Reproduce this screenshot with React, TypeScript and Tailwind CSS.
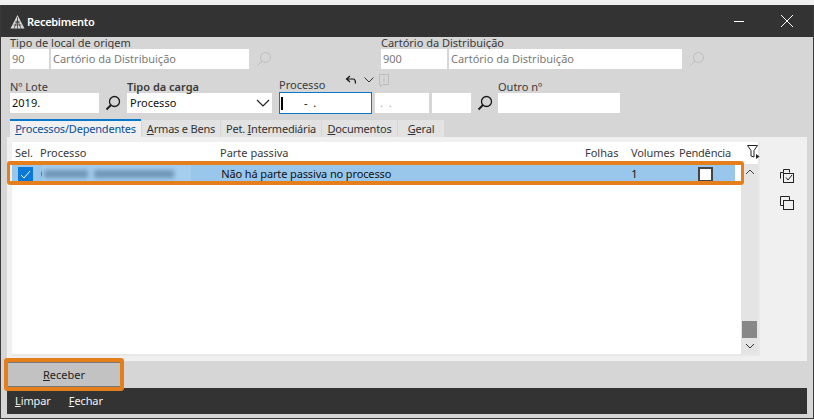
import React from "react";

const Search = ({ muted = false }: { muted?: boolean }) => (
  <svg width="16" height="16" viewBox="0 0 16 16" fill="none" stroke={muted ? "#bdbdbd" : "#1a1a1a"} strokeWidth={muted ? 1 : 1.3}>
    <circle cx="9.5" cy="6.5" r="5" />
    <path d="M6 10 L1.5 14.5" strokeWidth={muted ? 1 : 1.8} />
  </svg>
);

const Field = ({ w, children, muted = false, className = "" }: { w: string; children?: React.ReactNode; muted?: boolean; className?: string }) => (
  <div className={`${w} h-[20px] bg-white flex items-center px-[2px] ${muted ? "text-[#7a7a7a]" : "text-[#111]"} ${className}`}>{children}</div>
);

const Tab = ({ first, rest, pre = "", active = false, w }: { first: string; rest: string; pre?: string; active?: boolean; w: string }) => (
  <div className={`${w} flex items-center justify-center tracking-[-0.2px] ${active ? "h-[18px] bg-[#f0f0f0] border-t-2 border-[#0a78c8] text-[#0a4f96]" : "h-[17px] bg-[#e2e2e2] mt-[1px] text-[#333]"}`}>
    <span className="whitespace-pre">
      {pre}
      <u>{first}</u>
      {rest}
    </span>
  </div>
);

export default function App() {
  return (
    <div className="w-[814px] h-[420px] bg-[#f0f0f0] pt-[5px] overflow-hidden text-[11px] leading-[14px] text-[#3a3a3a]" style={{ fontFamily: '"Noto Sans", sans-serif' }}>
      <div className="h-[414px] bg-[#d6d6d6] border-l border-r border-b border-[#3a3a3a] flex flex-col relative">
        {/* title bar */}
        <div className="h-[32px] shrink-0 bg-[#333333] flex items-center pl-[9px] pr-[19px] text-white font-semibold">
          <svg width="15" height="15" viewBox="0 0 15 15" className="mr-[2px]">
            <path d="M7.5 1 L14.5 14.5 H0.5 Z" fill="#d8d8d8" />
            <path d="M7.5 3 V14.5 M5 8 H10 M3.5 11 H11.5 M4 14.5 L7.5 6 L11 14.5" stroke="#333" strokeWidth="0.7" fill="none" />
          </svg>
          <span className="tracking-[-0.3px] pt-[1px]">Recebimento</span>
          <div className="flex-1" />
          <svg width="12" height="12" viewBox="0 0 12 12" className="mr-[35px]"><path d="M1 6.5 H11" stroke="#fff" strokeWidth="1" /></svg>
          <svg width="14" height="14" viewBox="0 0 14 14"><path d="M1 1 L13 13 M13 1 L1 13" stroke="#fff" strokeWidth="1" fill="none" /></svg>
        </div>

        {/* top fields */}
        <div className="flex pl-[9px]">
          <div className="w-[371px]">
            <div className="h-[12px] leading-[12px]">Tipo de local de origem</div>
            <div className="flex items-center gap-[2px]">
              <Field w="w-[39px]" muted>90</Field>
              <Field w="w-[198px]" muted>Cartório da Distribuição</Field>
              <div className="ml-[5px]"><Search muted /></div>
            </div>
          </div>
          <div>
            <div className="h-[12px] leading-[12px]">Cartório da Distribuição</div>
            <div className="flex items-center gap-[2px]">
              <Field w="w-[66px]" muted>900</Field>
              <Field w="w-[233px]" muted>Cartório da Distribuição</Field>
              <div className="ml-[5px]"><Search muted /></div>
            </div>
          </div>
        </div>

        {/* second row */}
        <div className="flex items-end pl-[9px] mt-[6px]">
          <div className="w-[89px]">
            <div className="h-[13px] leading-[13px]">Nº Lote</div>
            <Field w="w-[89px]">2019.</Field>
          </div>
          <div className="w-[28px] h-[20px] flex items-center justify-center"><Search /></div>
          <div className="w-[145px]">
            <div className="h-[13px] leading-[13px] font-semibold">Tipo da carga</div>
            <Field w="w-[145px]" className="justify-between pl-[3px]">
              Processo
              <svg width="14" height="8" viewBox="0 0 14 8" fill="none" stroke="#222" strokeWidth="1.2"><path d="M1 1 L7 7 L13 1" /></svg>
            </Field>
          </div>
          <div className="w-[93px] ml-[7px]">
            <div className="flex items-start h-[17px]">
              <span className="mt-[3px]">Processo</span>
              <svg width="12" height="10" viewBox="0 0 12 10" className="ml-[20px] shrink-0" fill="none" stroke="#111" strokeWidth="1.2"><path d="M5 1 L1.5 4 L5 7 M1.5 4 H8 Q10.5 4 10.5 8.5" /></svg>
              <svg width="10" height="6" viewBox="0 0 10 6" className="ml-[7px] mt-[2px] shrink-0" fill="none" stroke="#333"><path d="M0.5 0.5 L5 5 L9.5 0.5" /></svg>
              <svg width="10" height="13" viewBox="0 0 10 13" className="ml-[5px] -mt-[1px] shrink-0" fill="none" stroke="#bcbcbc"><path d="M0.5 0.5 H9.5 V10.5 H4 L1.5 12.5 V10.5 H0.5 Z" /><path d="M5 2.5 V3.5 M5 4.5 V8.5" /></svg>
            </div>
            <div className="w-[93px] h-[22px] bg-white border border-[#0a78c8] flex items-center pl-[1px] -mb-px">
              <div className="w-[2px] h-[13px] bg-black" />
              <span className="ml-[21px] text-[#111]">-&nbsp;&nbsp;.</span>
            </div>
          </div>
          <Field w="w-[54px]" muted className="ml-[3px]"><span className="pl-[3px] text-[#aaa]">.&nbsp;&nbsp;.</span></Field>
          <Field w="w-[39px]" className="ml-[3px]" />
          <div className="w-[27px] h-[20px] flex items-center justify-center"><Search /></div>
          <div className="w-[122px]">
            <div className="h-[13px] leading-[13px]">Outro nº</div>
            <Field w="w-[122px]" />
          </div>
        </div>

        {/* tabs */}
        <div className="flex pl-[9px] mt-[6px] gap-[1px] items-start h-[18px]">
          <Tab w="w-[131px]" first="P" rest="rocessos/Dependentes" active />
          <Tab w="w-[78px]" first="A" rest="rmas e Bens" />
          <Tab w="w-[100px]" pre="Pet. " first="I" rest="ntermediária" />
          <Tab w="w-[75px]" first="D" rest="ocumentos" />
          <Tab w="w-[46px]" first="G" rest="eral" />
        </div>

        {/* panel */}
        <div className="h-[224px] bg-[#f0f0f0] mx-[6px] pl-[5px] pt-[5px] flex">
          <div className="w-[748px] h-[214px] bg-white border-r-2 border-b-2 border-[#e8e8e8] flex flex-col relative">
            <div className="h-[23px] flex items-center pl-[3px] pb-[1px] text-[#3a3a3a]">
              <span className="w-[25px]">Sel.</span>
              <span className="w-[180px]">Processo</span>
              <span className="w-[365px]">Parte passiva</span>
              <span className="w-[46px]">Folhas</span>
              <span className="w-[48px] tracking-[-0.1px]">Volumes</span>
              <span className="tracking-[-0.2px]">Pendência</span>
            </div>
            <div className="flex-1 flex">
              <div className="w-[729px]">
                <div className="w-[723px] h-[17px] bg-[#99c7ec] flex items-center text-[#111]">
                  <div className="ml-[6px] w-[15px] h-[15px] mt-[1px] shrink-0 bg-[#0a78d7] flex items-center justify-center">
                    <svg width="11" height="9" viewBox="0 0 11 9" fill="none" stroke="#fff"><path d="M1 5 L4 8 L10 1" /></svg>
                  </div>
                  <span className="ml-[8px] shrink-0">0</span>
                  <div className="-ml-[5px] relative w-[149px] h-[17px] shrink-0 bg-[#a4cdee] flex items-center gap-[6px] pl-[2px]">
                    <div className="w-[44px] h-[8px] bg-[#6f96b6] blur-[2px]" />
                    <div className="w-[80px] h-[8px] bg-[#6f96b6] blur-[2px]" />
                  </div>
                  <span className="ml-[30px] w-[410px] shrink-0 tracking-[-0.13px]">Não há parte passiva no processo</span>
                  <span className="w-[67px] shrink-0">1</span>
                  <div className="w-[15px] h-[15px] mt-[1px] shrink-0 bg-white border-2 border-[#444]" />
                </div>
              </div>
              <div className="w-[17px] ml-[1px] bg-[#e4e4e4] flex flex-col items-center justify-between -mt-[1px]">
                <svg width="10" height="16" viewBox="0 0 10 16" fill="none" stroke="#444"><path d="M1 10 L5 6 L9 10" /></svg>
                <div className="flex-1" />
                <div className="w-[15px] h-[17px] bg-[#888888]" />
                <svg width="10" height="16" viewBox="0 0 10 16" fill="none" stroke="#333"><path d="M1 6 L5 10 L9 6" /></svg>
              </div>
            </div>
            <div className="absolute -left-[5px] top-[19px] w-[737px] h-[24px] border-x-[3px] border-y-[4px] border-[#e57f1c] rounded-[3px] pointer-events-none" />
          </div>
          <div className="flex-1 relative">
            <svg width="13" height="15" viewBox="0 0 13 15" className="absolute -left-[13px] top-[3px]" fill="none" stroke="#222"><path d="M0.5 0.5 H10.5 L7 5.5 V12 L4 11 V5.5 Z" /><path d="M9 9 L12.5 11.5 L9 14 Z" fill="#222" stroke="none" /></svg>
            <div className="flex flex-col items-center gap-[13px] pt-[27px] pl-[6px]">
              <svg width="14" height="14" viewBox="0 0 14 14" fill="none" stroke="#222"><path d="M3.5 3.5 V0.5 H9.5 V3.5 M0.5 9.5 V3.5 H3.5" /><rect x="3.5" y="4.5" width="10" height="9" /><path d="M6 8.5 L8 11 L12 6" /></svg>
              <svg width="14" height="14" viewBox="0 0 14 14" fill="none" stroke="#222"><path d="M3.5 9.5 H0.5 V0.5 H9.5 V4" /><rect x="3.5" y="4.5" width="10" height="9" /></svg>
            </div>
          </div>
        </div>

        {/* receber */}
        <div className="pl-[7px] pt-[1px] h-[27px]">
          <div className="w-[112px] h-[25px] bg-[#c2c2c2] border-y border-[#777] flex items-center justify-center text-[#222]">
            <span><u>R</u>eceber</span>
          </div>
        </div>

        {/* bottom bar */}
        <div className="mx-[6px] h-[26px] bg-[#333333] text-[#f2f2f2] flex items-center pl-[8px] gap-[18px]">
          <span className="tracking-[-0.1px]"><u>L</u>impar</span>
          <span className="tracking-[-0.1px]"><u>F</u>echar</span>
        </div>

        <div className="absolute left-[3px] top-[353px] w-[120px] h-[33px] border-[4px] border-[#e57f1c] rounded-[3px] pointer-events-none" />
      </div>
    </div>
  );
}
